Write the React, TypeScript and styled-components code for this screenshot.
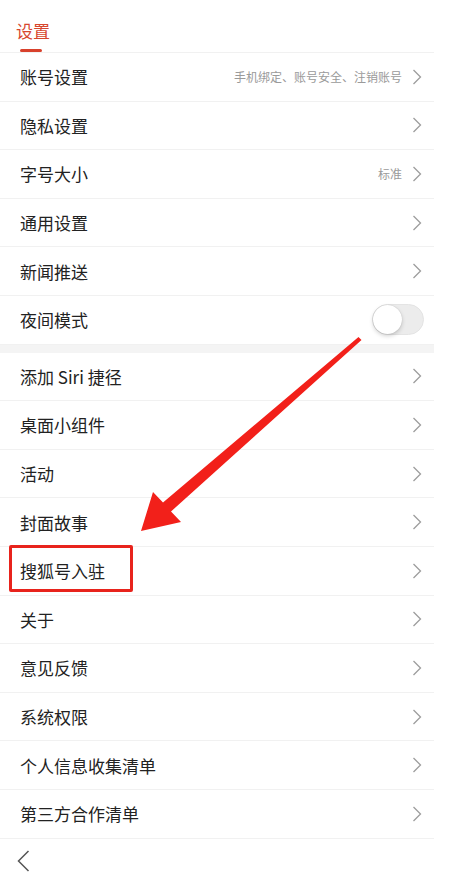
import React from "react";
import styled, { createGlobalStyle } from "styled-components";

const GlobalStyle = createGlobalStyle`
  html, body {
    margin: 0;
    padding: 0;
    background: #ffffff;
  }
  body {
    font-family: "Noto Sans CJK SC", "Noto Sans", sans-serif;
  }
`;

const Page = styled.div`
  position: relative;
  width: 454px;
  height: 882px;
  overflow: hidden;
  background: #ffffff;
`;

const Panel = styled.div`
  width: 434px;
  display: flex;
  flex-direction: column;
`;

const Header = styled.div`
  height: 53px;
  box-sizing: border-box;
  padding-left: 16px;
  display: flex;
  align-items: flex-end;
  border-bottom: 1px solid #f1f1f1;
`;

const Tab = styled.div`
  display: flex;
  flex-direction: column;
  color: #d7472e;
  font-size: 17px;
  line-height: 24px;

  &::after {
    content: "";
    display: block;
    width: 22px;
    height: 3px;
    margin: 6px 0 0 4px;
    border-radius: 2px;
    background: #d8412c;
  }
`;

const Row = styled.div`
  height: 48.6px;
  box-sizing: border-box;
  padding: 0 12px 0 20px;
  display: flex;
  align-items: center;
  border-bottom: 1px solid #f1f1f1;
`;

const Label = styled.span<{ $marked?: boolean }>`
  position: relative;
  flex: 1;
  font-size: 17px;
  color: #222222;
  white-space: nowrap;

  ${({ $marked }) =>
    $marked &&
    `
    &::after {
      content: "";
      position: absolute;
      left: -11px;
      top: -13px;
      width: 118px;
      height: 41px;
      border: 3px solid #e8231c;
      border-radius: 2px;
    }
  `}
`;

const Hint = styled.span`
  font-size: 12px;
  color: #9a9a9a;
  margin-right: 10px;
  white-space: nowrap;
`;

const Gap = styled.div`
  height: 8px;
  background: #f4f4f4;
`;

const Toggle = styled.div`
  width: 52px;
  height: 31px;
  box-sizing: border-box;
  border-radius: 16px;
  background: #ececec;
  border: 1px solid #e4e4e4;
  display: flex;
  align-items: center;
  margin-right: -2px;

  &::before {
    content: "";
    width: 29px;
    height: 29px;
    border-radius: 50%;
    background: #ffffff;
    box-shadow: 0 2px 4px rgba(0, 0, 0, 0.18), 0 0 1px rgba(0, 0, 0, 0.2);
  }
`;

const BackBar = styled.div`
  height: 44px;
  padding-left: 17px;
  display: flex;
  align-items: center;
`;

const Overlay = styled.svg`
  position: absolute;
  left: 0;
  top: 0;
  pointer-events: none;
`;

const Chevron = () => (
  <svg width="10" height="16" viewBox="0 0 10 16">
    <path d="M1.5 1 L8.5 8 L1.5 15" fill="none" stroke="#9d9d9d" strokeWidth="1.3" />
  </svg>
);

const BackIcon = () => (
  <svg width="13" height="22" viewBox="0 0 13 22">
    <path d="M11.5 1 L1.5 11 L11.5 21" fill="none" stroke="#555555" strokeWidth="1.5" />
  </svg>
);

type Item = { label: string; hint?: string; toggle?: boolean; marked?: boolean };

const groupOne: Item[] = [
  { label: "账号设置", hint: "手机绑定、账号安全、注销账号" },
  { label: "隐私设置" },
  { label: "字号大小", hint: "标准" },
  { label: "通用设置" },
  { label: "新闻推送" },
  { label: "夜间模式", toggle: true },
];

const groupTwo: Item[] = [
  { label: "添加 Siri 捷径" },
  { label: "桌面小组件" },
  { label: "活动" },
  { label: "封面故事" },
  { label: "搜狐号入驻", marked: true },
  { label: "关于" },
  { label: "意见反馈" },
  { label: "系统权限" },
  { label: "个人信息收集清单" },
  { label: "第三方合作清单" },
];

function SettingRow({ item }: { item: Item }) {
  return (
    <Row>
      <Label $marked={item.marked}>{item.label}</Label>
      {item.hint && <Hint>{item.hint}</Hint>}
      {item.toggle ? <Toggle /> : <Chevron />}
    </Row>
  );
}

export default function App() {
  return (
    <Page>
      <GlobalStyle />
      <Panel>
        <Header>
          <Tab>设置</Tab>
        </Header>
        {groupOne.map((item) => (
          <SettingRow key={item.label} item={item} />
        ))}
        <Gap />
        {groupTwo.map((item) => (
          <SettingRow key={item.label} item={item} />
        ))}
        <BackBar>
          <BackIcon />
        </BackBar>
      </Panel>
      <Overlay width="454" height="882" viewBox="0 0 454 882">
        <polygon
          points="358.5,337 163,502.5 153,492 141,531 181,522 171,511.5 361.5,340"
          fill="#f2201a"
        />
      </Overlay>
    </Page>
  );
}
